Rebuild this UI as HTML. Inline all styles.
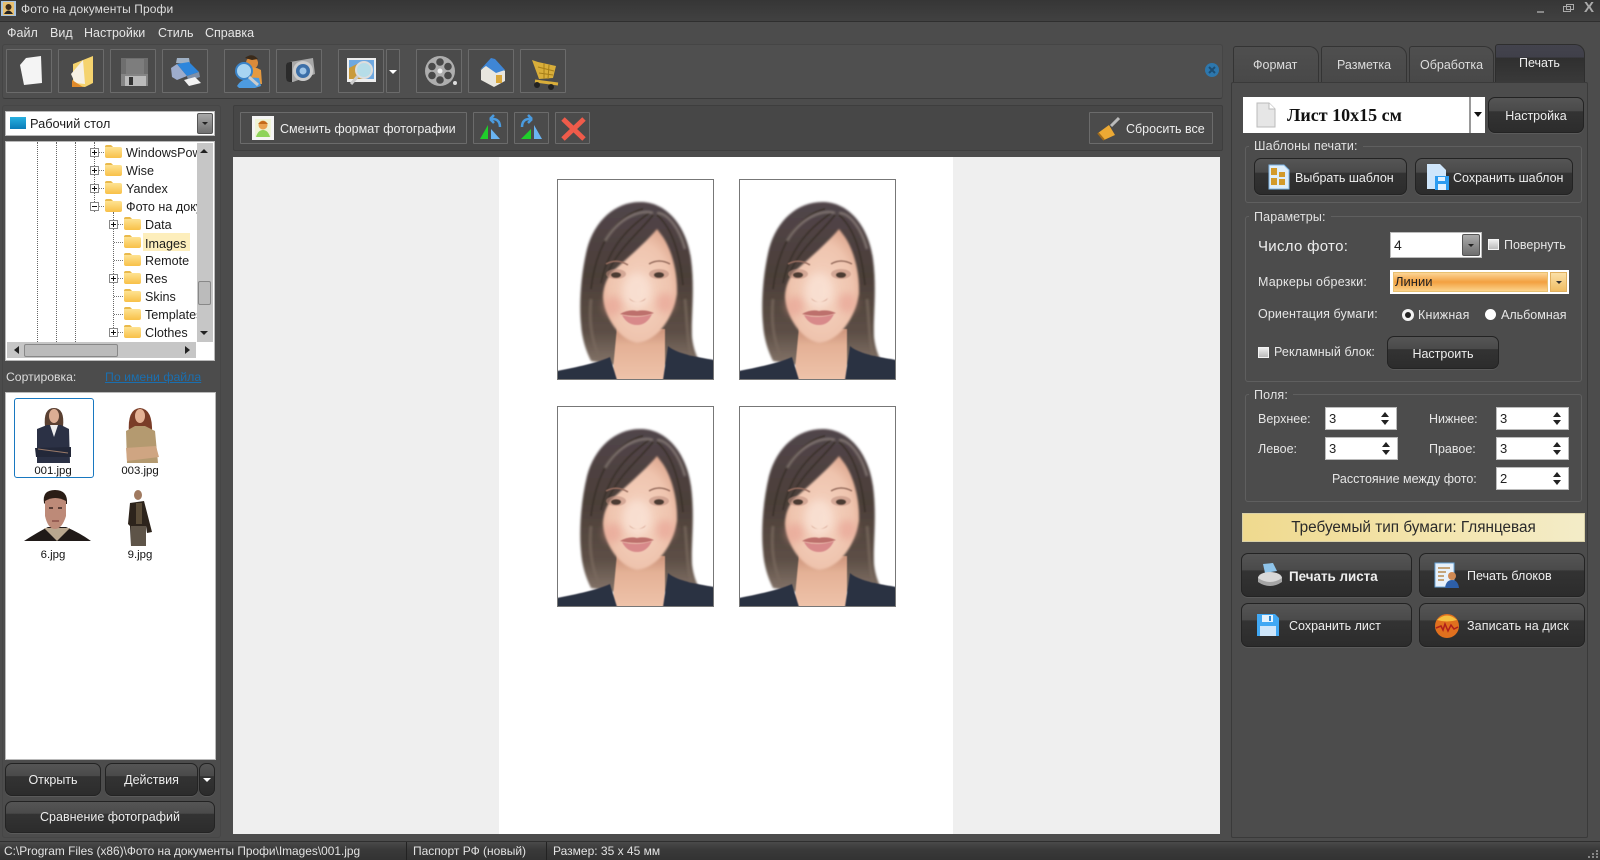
<!DOCTYPE html>
<html lang="ru"><head><meta charset="utf-8"><title>Фото на документы Профи</title>
<style>
*{box-sizing:border-box}
html,body{margin:0;padding:0;width:1600px;height:860px;overflow:hidden;background:#4c4c4c;font-family:"Liberation Sans",sans-serif;font-size:12.5px;color:#e6e6e6}
.a{position:absolute}
.t{position:absolute;white-space:nowrap;line-height:16px;height:16px}
.tb{position:absolute;border:1px solid #6b6b6b;background:#4b4b4b;border-radius:1px}
.tb svg{position:absolute;left:0;top:0}
.d{position:absolute;border:1px solid #232323;border-radius:7px;background:linear-gradient(#555 0,#4a4a4a 38%,#333 40%,#2c2c2c 100%);box-shadow:0 1px 0 #5a5a5a;color:#eee;white-space:nowrap;display:flex;align-items:center;justify-content:center}
.s{padding-top:2px}
.g{position:absolute;border:1px solid #5f5f5f;border-radius:3px}
.gl{position:absolute;background:#4c4c4c;padding:0 5px;line-height:16px;white-space:nowrap;color:#e2e2e2;letter-spacing:.15px}
.inp{position:absolute;background:#fff;color:#222;border:1px solid #bbb;padding-left:3px;line-height:22px;font-size:13px}
.sp{position:absolute;right:7px;width:0;height:0;border-left:4px solid transparent;border-right:4px solid transparent}
.up{top:4px;border-bottom:5px solid #222}.dn{bottom:4px;border-top:5px solid #222}
.ph{position:absolute;width:157px;height:201px;border:1px solid #777;background:#fff;overflow:hidden}
.tl{position:absolute;color:#1c1c1c;font-size:12.6px;line-height:16px;white-space:nowrap}
.bx{position:absolute;width:9px;height:9px;border:1px solid #888;background:#fff}
.bx:before{content:"";position:absolute;left:1px;top:3px;width:5px;height:1px;background:#111}
.bx.p:after{content:"";position:absolute;left:3px;top:1px;width:1px;height:5px;background:#111}
.vd{position:absolute;width:0;border-left:1px dotted #666}
.hd{position:absolute;height:0;border-top:1px dotted #777}
.fo{position:absolute;width:17px;height:16px;margin-top:-2px}
.cb{position:absolute;width:11px;height:11px;background:linear-gradient(#eee,#bbb);border:1px solid #f4f4f4}
.ar{position:absolute;width:0;height:0}
.thl{position:absolute;color:#111;font-size:11.4px;line-height:13px;width:80px;text-align:center}
</style></head><body>
<svg width="0" height="0" style="position:absolute">
<defs>
<linearGradient id="fg" x1="0" y1="0" x2="0" y2="1"><stop offset="0" stop-color="#ffe9a0"/><stop offset="1" stop-color="#f8c048"/></linearGradient>
<radialGradient id="sk" cx=".5" cy=".55" r=".6"><stop offset="0" stop-color="#f6d5c3"/><stop offset=".7" stop-color="#efc4ae"/><stop offset="1" stop-color="#dca68e"/></radialGradient>
<linearGradient id="hr" x1="0" y1="0" x2="0" y2="1"><stop offset="0" stop-color="#51454a"/><stop offset=".45" stop-color="#4c3f39"/><stop offset=".8" stop-color="#5d4f46"/><stop offset="1" stop-color="#85756a"/></linearGradient>
<linearGradient id="nk" x1="0" y1="0" x2="0" y2="1"><stop offset="0" stop-color="#c99078"/><stop offset=".35" stop-color="#e4b196"/><stop offset="1" stop-color="#eec3aa"/></linearGradient>
<filter id="b1" x="-20%" y="-20%" width="140%" height="140%"><feGaussianBlur stdDeviation="1"/></filter>
<filter id="b2" x="-60%" y="-60%" width="220%" height="220%"><feGaussianBlur stdDeviation="4"/></filter>
<filter id="b3" x="-30%" y="-60%" width="160%" height="220%"><feGaussianBlur stdDeviation=".6"/></filter>
<symbol id="folder" viewBox="0 0 17 16"><path d="M0 4Q0 2 2 2H6L8 4H15Q17 4 17 6V13Q17 15 15 15H2Q0 15 0 13Z" fill="url(#fg)"/><path d="M0 4Q0 2 2 2H6L8 4H0Z" fill="#e9b94c"/></symbol>
<symbol id="woman" viewBox="0 0 157 201">
<path d="M85 23C60 22 38 40 30 70C24 95 22 125 24 145C25 160 29 172 34 182L56 186L108 186L143 184C139 176 136 168 135 158C134 138 138 110 134 80C130 50 112 24 85 23Z" fill="url(#hr)" filter="url(#b1)"/>
<path d="M60 148L55 201H108L108 150Z" fill="url(#nk)" filter="url(#b3)"/>
<path d="M0 201V192C20 188 40 184 53 178L60 201Z" fill="#2b3042" filter="url(#b3)"/>
<path d="M106 201L111 167C120 175 140 178 157 181V201Z" fill="#2b3042" filter="url(#b3)"/>
<path d="M100 50C90 62 72 78 56 92C50 98 46 108 46 118C47 135 60 160 80 164C100 162 116 140 120 115C121 92 114 70 106 58Z" fill="url(#sk)" filter="url(#b1)"/>
<ellipse cx="56" cy="127" rx="9" ry="10" fill="#e79d90" opacity=".55" filter="url(#b2)"/>
<ellipse cx="108" cy="124" rx="9" ry="10" fill="#e79d90" opacity=".55" filter="url(#b2)"/>
<ellipse cx="80" cy="112" rx="14" ry="18" fill="#fae4d8" opacity=".7" filter="url(#b2)"/>
<path d="M92 34C76 46 52 64 44 104M96 36C84 52 60 70 50 96M86 30C62 36 40 60 34 110M100 36C112 46 122 66 126 106" stroke="#3a302c" stroke-width="2" fill="none" opacity=".75" filter="url(#b3)"/>
<path d="M96 34C84 30 62 38 48 62M100 34C110 34 122 48 128 70" stroke="#8b7f7a" stroke-width="2.500" fill="none" opacity=".8" filter="url(#b1)"/>
<path d="M34 120C32 140 34 160 42 178M128 120C130 140 130 160 134 176" stroke="#7a6a5e" stroke-width="3" fill="none" opacity=".7" filter="url(#b1)"/>
<path d="M49 85Q60 79 71 86" stroke="#9a6f60" stroke-width="1.500" fill="none" filter="url(#b3)"/>
<path d="M92 85Q102 79 113 85" stroke="#9a6f60" stroke-width="1.500" fill="none" filter="url(#b3)"/>
<ellipse cx="59" cy="95" rx="10" ry="5" fill="#c09080" opacity=".6" filter="url(#b3)"/>
<ellipse cx="102" cy="95" rx="10" ry="5" fill="#c09080" opacity=".6" filter="url(#b3)"/>
<ellipse cx="59" cy="96" rx="5" ry="2.800" fill="#4b3a30" filter="url(#b3)"/>
<ellipse cx="102" cy="96" rx="5" ry="2.800" fill="#4b3a30" filter="url(#b3)"/>
<path d="M72 119Q80 127 89 119Q87 123 80 123Q74 123 72 119Z" fill="#c9937f" filter="url(#b3)"/>
<path d="M63 135Q72 130 80 132Q88 130 97 134Q90 137 80 137Q70 137 63 135Z" fill="#bd6f6c" filter="url(#b3)"/>
<path d="M65 136Q80 140 95 135Q90 146 80 146Q70 146 65 136Z" fill="#d8898a" filter="url(#b3)"/>
</symbol>
</defs>
</svg>

<!-- title bar -->
<div class="a" style="left:0;top:0;width:1600px;height:22px;background:linear-gradient(#363636,#414141);border-bottom:1px solid #2f2f2f"></div>
<svg class="a" style="left:1px;top:1px" width="15" height="15"><rect width="15" height="15" fill="#a9c4df"/><rect x="2" y="1" width="11" height="13" fill="#e8c070"/><circle cx="7.500" cy="6" r="3" fill="#3a2a1a"/><path d="M3 13Q7.500 6 12 13Z" fill="#222"/></svg>
<div class="t" style="left:21px;top:1px;font-size:12px;letter-spacing:.1px;color:#ddd">Фото на документы Профи</div>
<div class="a" style="left:1537px;top:11px;width:7px;height:2px;background:#888"></div>
<div class="a" style="left:1563px;top:6px;width:8px;height:6px;border:1px solid #aaa"></div>
<div class="a" style="left:1566px;top:4px;width:8px;height:6px;border:1px solid #aaa"></div>
<div class="t" style="left:1584px;top:0;font-size:15px;color:#aaa;font-weight:bold">X</div>

<!-- menu -->
<div class="t" style="left:7px;top:25px">Файл</div>
<div class="t" style="left:50px;top:25px">Вид</div>
<div class="t" style="left:84px;top:25px">Настройки</div>
<div class="t" style="left:158px;top:25px">Стиль</div>
<div class="t" style="left:205px;top:25px">Справка</div>

<!-- main toolbar -->
<div class="a" style="left:2px;top:44px;width:1221px;height:55px;background:#4f4f4f;border:1px solid #454545;border-bottom-color:#3a3a3a;border-radius:3px"></div>
<div class="tb" style="left:6px;top:49px;width:46px;height:44px"><svg width="46" height="44"><path d="M19 8L34 6L35 33L17 35L13 15Z" fill="#f4f4f4"/></svg></div>
<div class="tb" style="left:58px;top:49px;width:46px;height:44px"><svg width="46" height="44"><path d="M14 14L34 6V33L26 37L14 36Z" fill="#f5d36e"/><path d="M12 24L24 10L26 34L16 33Z" fill="#f6f0e4"/><path d="M13 30L24 37L13 37Z" fill="#e08a2a"/></svg></div>
<div class="tb" style="left:110px;top:49px;width:46px;height:44px"><svg width="46" height="44"><path d="M10 8H37V36H10Z" fill="#858585"/><rect x="10" y="8" width="27" height="16" fill="#6e6e6e"/><rect x="15" y="9" width="18" height="15" fill="#7d7d7d"/><rect x="14" y="26" width="21" height="10" fill="#bbb"/><rect x="18" y="27" width="4" height="8" fill="#333"/></svg></div>
<div class="tb" style="left:162px;top:49px;width:46px;height:44px"><svg width="46" height="44"><path d="M13 13L14 8L26 8L27 14Z" fill="#9fb0c4"/><path d="M8 18L14 14L24 26L14 30L9 27Z" fill="#9daccc"/><path d="M14 14L26 12L36 22L24 26Z" fill="#2e86dc"/><path d="M24 26L36 22L37 27L25 31Z" fill="#7f90a8"/><path d="M21 30L32 27L38 33L26 36Z" fill="#f2f2f2"/></svg></div>
<div class="tb" style="left:224px;top:49px;width:46px;height:44px"><svg width="46" height="44"><circle cx="27" cy="13" r="6" fill="#d98a3a"/><path d="M20 8Q27 2 33 9L27 10Z" fill="#3a2a1a"/><path d="M21 19Q27 15 36 20L37 34H25Z" fill="#e69a40"/><path d="M12 36Q18 26 34 28L36 36L30 38H14Z" fill="#4d9be0"/><circle cx="19" cy="21" r="8" fill="#a8d4f2" stroke="#3a83c8" stroke-width="2"/><path d="M24 27L33 35" stroke="#ccc" stroke-width="3"/></svg></div>
<div class="tb" style="left:276px;top:49px;width:46px;height:44px"><svg width="46" height="44"><path d="M9 15Q9 12 13 12L36 8L38 24L16 32H12Q9 32 9 28Z" fill="#a8a8a8"/><path d="M9 15Q9 12 13 12H15V32H12Q9 32 9 28Z" fill="#2b2b2b"/><circle cx="26" cy="21" r="10" fill="#ccc"/><circle cx="26" cy="21" r="7" fill="#3c6fa8"/><circle cx="26" cy="21" r="3.500" fill="#9ec5e8"/></svg></div>
<div class="tb" style="left:338px;top:49px;width:46px;height:44px"><svg width="46" height="44"><rect x="8" y="8" width="29" height="24" fill="#eee"/><rect x="10" y="10" width="25" height="19" fill="#6ea8e0"/><path d="M10 29V18L18 14L26 24V29Z" fill="#c99a3a"/><circle cx="25" cy="20" r="8" fill="#b6dde8" stroke="#ddd" stroke-width="2"/><path d="M19 26L12 34" stroke="#ccc" stroke-width="3"/></svg></div>
<div class="tb" style="left:386px;top:49px;width:14px;height:44px"><div class="ar" style="left:2px;top:20px;border-left:4px solid transparent;border-right:4px solid transparent;border-top:4px solid #fff"></div></div>
<div class="tb" style="left:416px;top:49px;width:46px;height:44px"><svg width="46" height="44"><circle cx="23" cy="21" r="15" fill="#aeaeae"/><circle cx="23" cy="21" r="2.500" fill="#eee"/><g fill="#4a4a4a"><circle cx="23" cy="12" r="3.800"/><circle cx="23" cy="30" r="3.800"/><circle cx="15" cy="16.500" r="3.800"/><circle cx="31" cy="16.500" r="3.800"/><circle cx="15" cy="25.500" r="3.800"/><circle cx="31" cy="25.500" r="3.800"/></g><circle cx="38" cy="33" r="2" fill="#ddd"/></svg></div>
<div class="tb" style="left:468px;top:49px;width:46px;height:44px"><svg width="46" height="44"><path d="M12 20V30L25 37L36 31V21L24 9Z" fill="#e8e6df"/><path d="M11 20L22 8L26 9L36 20L27 23L17 16Z" fill="#3f86d6"/><rect x="27" y="25" width="6" height="8" fill="#d8a63a"/></svg></div>
<div class="tb" style="left:520px;top:49px;width:46px;height:44px"><svg width="46" height="44"><path d="M11 10L17 12L35 16L32 28L18 29Z" fill="#d9ae3a"/><path d="M17 17L33 21M18 23L32 25M23 13L23 29M28 15L27 29" stroke="#a67d18" stroke-width="1"/><path d="M14 31L37 34" stroke="#d9ae3a" stroke-width="3"/><circle cx="16" cy="35" r="3" fill="#222"/><circle cx="30" cy="37" r="3" fill="#222"/></svg></div>
<svg class="a" style="left:1204px;top:62px" width="16" height="16"><circle cx="8" cy="8" r="7" fill="#2d77ad"/><path d="M5 5L8 8L11 5M5 11L8 8L11 11" stroke="#1d4d72" stroke-width="2" fill="none"/></svg>

<!-- left panel -->
<div class="a" style="left:2px;top:105px;width:219px;height:733px;background:#4c4c4c;border:1px solid #464646;border-radius:3px"></div>
<div class="a" style="left:5px;top:111px;width:210px;height:25px;background:#fff;border:1px solid #b9b9b9"></div>
<div class="a" style="left:10px;top:117px;width:16px;height:12px;background:linear-gradient(#27b0e0,#0a7cb8)"></div>
<div class="t" style="left:30px;top:116px;color:#1c1c1c;font-size:12.800px">Рабочий стол</div>
<div class="a" style="left:197px;top:113px;width:16px;height:21px;background:linear-gradient(#a8a8a8,#707070);border:1px solid #555;border-radius:2px"></div>
<div class="ar" style="left:202px;top:122px;border-left:3px solid transparent;border-right:3px solid transparent;border-top:3px solid #222"></div>

<div class="a" style="left:5px;top:141px;width:210px;height:220px;background:#fff;border:1px solid #b9b9b9"></div>
<div class="a" style="left:6px;top:142px;width:191px;height:200px;overflow:hidden">
 <div class="vd" style="left:31px;top:0;height:200px"></div><div class="vd" style="left:50px;top:0;height:200px"></div><div class="vd" style="left:69px;top:0;height:200px"></div><div class="vd" style="left:88px;top:0;height:70px"></div><div class="vd" style="left:107px;top:70px;height:120px"></div>
 <div class="hd" style="left:92px;top:10px;width:8px"></div><div class="hd" style="left:92px;top:28px;width:8px"></div><div class="hd" style="left:92px;top:46px;width:8px"></div><div class="hd" style="left:92px;top:64px;width:8px"></div>
 <div class="hd" style="left:111px;top:82px;width:8px"></div><div class="hd" style="left:108px;top:100px;width:11px"></div><div class="hd" style="left:108px;top:118px;width:11px"></div><div class="hd" style="left:111px;top:136px;width:8px"></div><div class="hd" style="left:108px;top:154px;width:11px"></div><div class="hd" style="left:108px;top:172px;width:11px"></div><div class="hd" style="left:111px;top:190px;width:8px"></div>
 <div class="bx p" style="left:84px;top:6px"></div><div class="bx p" style="left:84px;top:24px"></div><div class="bx p" style="left:84px;top:42px"></div><div class="bx" style="left:84px;top:60px"></div>
 <div class="bx p" style="left:103px;top:78px"></div><div class="bx p" style="left:103px;top:132px"></div><div class="bx p" style="left:103px;top:186px"></div>
 <svg class="fo" style="left:99px;top:3px"><use href="#folder"/></svg><div class="tl" style="left:120px;top:3px">WindowsPowerShell</div>
 <svg class="fo" style="left:99px;top:21px"><use href="#folder"/></svg><div class="tl" style="left:120px;top:21px">Wise</div>
 <svg class="fo" style="left:99px;top:39px"><use href="#folder"/></svg><div class="tl" style="left:120px;top:39px">Yandex</div>
 <svg class="fo" style="left:99px;top:57px"><use href="#folder"/></svg><div class="tl" style="left:120px;top:57px">Фото на документы</div>
 <svg class="fo" style="left:118px;top:75px"><use href="#folder"/></svg><div class="tl" style="left:139px;top:75px">Data</div>
 <div class="a" style="left:137px;top:91px;width:47px;height:18px;background:#fdeebc"></div>
 <svg class="fo" style="left:118px;top:93px"><use href="#folder"/></svg><div class="tl" style="left:139px;top:94px">Images</div>
 <svg class="fo" style="left:118px;top:111px"><use href="#folder"/></svg><div class="tl" style="left:139px;top:111px">Remote</div>
 <svg class="fo" style="left:118px;top:129px"><use href="#folder"/></svg><div class="tl" style="left:139px;top:129px">Res</div>
 <svg class="fo" style="left:118px;top:147px"><use href="#folder"/></svg><div class="tl" style="left:139px;top:147px">Skins</div>
 <svg class="fo" style="left:118px;top:165px"><use href="#folder"/></svg><div class="tl" style="left:139px;top:165px">Templates</div>
 <svg class="fo" style="left:118px;top:183px"><use href="#folder"/></svg><div class="tl" style="left:139px;top:183px">Clothes</div>
</div>
<div class="a" style="left:197px;top:143px;width:16px;height:199px;background:#c6c6c6"></div>
<div class="a" style="left:198px;top:281px;width:13px;height:24px;background:#bbb;border:1px solid #888;border-radius:2px"></div>
<div class="ar" style="left:200px;top:149px;border-left:4px solid transparent;border-right:4px solid transparent;border-bottom:4px solid #222"></div>
<div class="ar" style="left:200px;top:331px;border-left:4px solid transparent;border-right:4px solid transparent;border-top:4px solid #222"></div>
<div class="a" style="left:7px;top:342px;width:189px;height:16px;background:#c6c6c6"></div>
<div class="a" style="left:24px;top:344px;width:94px;height:13px;background:#bbb;border:1px solid #888;border-radius:2px"></div>
<div class="ar" style="left:14px;top:346px;border-top:4px solid transparent;border-bottom:4px solid transparent;border-right:5px solid #222"></div>
<div class="ar" style="left:185px;top:346px;border-top:4px solid transparent;border-bottom:4px solid transparent;border-left:5px solid #222"></div>

<div class="t" style="left:6px;top:369px;color:#ddd;font-size:12.200px">Сортировка:</div>
<div class="t" style="left:105px;top:369px;color:#1a6fb0;text-decoration:underline;font-size:12.300px">По имени файла</div>

<div class="a" style="left:5px;top:392px;width:211px;height:368px;background:#fff;border:1px solid #b9b9b9"></div>
<div class="a" style="left:14px;top:398px;width:80px;height:80px;border:1px solid #1878c0;border-radius:3px"></div>
<!-- thumbs -->
<svg class="a" style="left:30px;top:405px" width="50" height="60"><path d="M15 22Q13 3 24 3Q35 3 33 22Z" fill="#5a4032"/><ellipse cx="24" cy="11" rx="5" ry="7" fill="#dcae94"/><path d="M7 24L17 20H31L39 24L40 58H7Z" fill="#2b3145"/><path d="M20 20L24 32L28 20Z" fill="#eee"/><path d="M5 43L41 42L41 52L6 52Z" fill="#232839"/><path d="M8 44L38 48" stroke="#9a7a68" stroke-width="1"/></svg>
<div class="thl" style="left:13px;top:465px">001.jpg</div>
<svg class="a" style="left:115px;top:405px" width="50" height="60"><path d="M14 28Q12 4 25 3Q38 4 37 28Z" fill="#7a3d28"/><ellipse cx="25" cy="11" rx="5" ry="7" fill="#e4b295"/><path d="M11 26L20 21H30L40 26L43 58H12Z" fill="#b49a70"/><path d="M11 43L41 41L44 52L12 56Z" fill="#cfa582"/></svg>
<div class="thl" style="left:100px;top:465px">003.jpg</div>
<svg class="a" style="left:20px;top:488px" width="72" height="56"><path d="M4 53Q18 44 28 39L46 39Q60 45 71 53Z" fill="#201a18"/><path d="M24 40L37 53L50 40Z" fill="#b9a78f"/><path d="M24 15Q22 2 35 2Q48 2 47 16L46 16H25Z" fill="#2a1d16"/><path d="M25 13Q35 7 46 13L46 28Q42 41 35 41Q28 41 25 28Z" fill="#bd8a78"/><path d="M29 20H33M38 20H42" stroke="#3a2420" stroke-width="1.500"/><path d="M32 33H39" stroke="#8a5048" stroke-width="1.500"/></svg>
<div class="thl" style="left:13px;top:549px">6.jpg</div>
<svg class="a" style="left:122px;top:488px" width="34" height="60"><ellipse cx="16" cy="7" rx="4" ry="5" fill="#a07a60"/><path d="M8 15L22 13L30 44L25 45L24 38L23 58H9L8 38L6 36Z" fill="#2d241c"/><path d="M14 15H20V36H14Z" fill="#5a4c38"/><path d="M9 38H24V58H9Z" fill="#5e5448"/></svg>
<div class="thl" style="left:100px;top:549px">9.jpg</div>

<div class="d" style="left:5px;top:763px;width:96px;height:33px">Открыть</div>
<div class="d" style="left:105px;top:763px;width:93px;height:33px">Действия</div>
<div class="d" style="left:199px;top:763px;width:16px;height:33px"><div class="ar" style="left:3px;top:14px;border-left:4px solid transparent;border-right:4px solid transparent;border-top:4px solid #fff"></div></div>
<div class="d" style="left:5px;top:801px;width:210px;height:32px">Сравнение фотографий</div>

<!-- center toolbar -->
<div class="a" style="left:233px;top:105px;width:990px;height:46px;background:#474747;border:1px solid #3e3e3e;border-radius:2px"></div>
<div class="tb" style="left:240px;top:112px;width:227px;height:32px"></div>
<svg class="a" style="left:252px;top:116px" width="22" height="24"><rect width="22" height="24" fill="#f4f4f4"/><rect x="3" y="3" width="16" height="18" fill="#eef3d6"/><circle cx="11" cy="9" r="4.500" fill="#e9a14e"/><path d="M6 8Q11 2 16 8Z" fill="#c26a1a"/><path d="M4 21Q6 14 11 14Q16 14 18 21Z" fill="#8ed35a"/></svg>
<div class="t" style="left:280px;top:121px;font-size:12.550px;color:#eee">Сменить формат фотографии</div>
<div class="tb" style="left:473px;top:112px;width:35px;height:32px"><svg width="35" height="32"><path d="M6 26L14 12V26Z" fill="#1fcf2a"/><path d="M17 16V26H26Z" fill="#6ab4f2"/><path d="M26 14Q26 5 16 6M16 6L20 2M16 6L20 10" stroke="#4a9be0" stroke-width="2.500" fill="none"/></svg></div>
<div class="tb" style="left:514px;top:112px;width:35px;height:32px"><svg width="35" height="32"><path d="M27 26L19 12V26Z" fill="#6ab4f2"/><path d="M16 16V26H6Z" fill="#1fcf2a"/><path d="M7 14Q7 5 17 6M17 6L13 2M17 6L13 10" stroke="#4a9be0" stroke-width="2.500" fill="none"/></svg></div>
<div class="tb" style="left:555px;top:112px;width:35px;height:32px"><svg width="35" height="32"><path d="M7 6L28 26M28 6L7 26" stroke="#ef5b4a" stroke-width="5"/></svg></div>
<div class="tb" style="left:1089px;top:112px;width:124px;height:32px"><svg width="30" height="30"><path d="M8 20L19 12L25 22L14 27Z" fill="#eca934"/><path d="M8 20L14 27" stroke="#a06a1a" stroke-width="2"/><path d="M21 13L29 5" stroke="#bbb" stroke-width="3"/></svg></div>
<div class="t" style="left:1126px;top:121px;font-size:12.500px;color:#eee">Сбросить все</div>

<!-- canvas -->
<div class="a" style="left:233px;top:157px;width:987px;height:677px;background:#efefef"></div>
<div class="a" style="left:499px;top:157px;width:454px;height:677px;background:#fff"></div>
<div class="ph" style="left:557px;top:179px"><svg width="155" height="199" viewBox="1 1 155 199"><use href="#woman" width="157" height="201"/></svg></div>
<div class="ph" style="left:739px;top:179px"><svg width="155" height="199" viewBox="1 1 155 199"><use href="#woman" width="157" height="201"/></svg></div>
<div class="ph" style="left:557px;top:406px"><svg width="155" height="199" viewBox="1 1 155 199"><use href="#woman" width="157" height="201"/></svg></div>
<div class="ph" style="left:739px;top:406px"><svg width="155" height="199" viewBox="1 1 155 199"><use href="#woman" width="157" height="201"/></svg></div>

<!-- right tabs -->
<div class="a" style="left:1233px;top:46px;width:86px;height:37px;background:linear-gradient(#4f4f4f,#484848);border:1px solid #343434;border-bottom:0;border-radius:3px 10px 0 0"></div>
<div class="a" style="left:1321px;top:46px;width:86px;height:37px;background:linear-gradient(#4f4f4f,#484848);border:1px solid #343434;border-bottom:0;border-radius:3px 10px 0 0"></div>
<div class="a" style="left:1409px;top:46px;width:85px;height:37px;background:linear-gradient(#4f4f4f,#484848);border:1px solid #343434;border-bottom:0;border-radius:3px 10px 0 0"></div>
<div class="a" style="left:1495px;top:44px;width:90px;height:39px;background:linear-gradient(#43434d 0,#40404a 32%,#2f2f2f 34%,#3a3a3a 100%);border:1px solid #2e2e2e;border-bottom:0;border-radius:3px 10px 0 0"></div>
<div class="t" style="left:1253px;top:57px;color:#ddd">Формат</div>
<div class="t" style="left:1337px;top:57px;color:#ddd">Разметка</div>
<div class="t" style="left:1420px;top:57px;color:#ddd">Обработка</div>
<div class="t" style="left:1519px;top:55px;color:#eee">Печать</div>
<div class="a" style="left:1231px;top:82px;width:357px;height:756px;background:#4c4c4c;border:1px solid #3a3a3a;border-radius:2px"></div>

<!-- sheet combo -->
<div class="a" style="left:1243px;top:97px;width:242px;height:36px;background:#fff"></div>
<div class="a" style="left:1469px;top:97px;width:2px;height:36px;background:#999"></div>
<svg class="a" style="left:1256px;top:102px" width="20" height="26"><path d="M1 1H13L19 7V25H1Z" fill="#e6e6e6" stroke="#bbb"/><path d="M13 1V7H19" fill="#fff" stroke="#bbb"/></svg>
<div class="t" style="left:1287px;top:106px;height:18px;line-height:18px;font-family:'Liberation Serif',serif;font-weight:bold;font-size:18px;color:#111">Лист 10x15 см</div>
<div class="ar" style="left:1474px;top:112px;border-left:4px solid transparent;border-right:4px solid transparent;border-top:5px solid #111"></div>
<div class="d s" style="left:1488px;top:97px;width:96px;height:36px">Настройка</div>

<!-- templates -->
<div class="g" style="left:1245px;top:146px;width:337px;height:57px"></div>
<div class="gl" style="left:1249px;top:138px">Шаблоны печати:</div>
<div class="d s" style="left:1254px;top:158px;width:153px;height:37px;justify-content:flex-start;padding-left:40px">Выбрать шаблон</div>
<svg class="a" style="left:1268px;top:164px" width="22" height="26"><path d="M1 1H16L21 6V25H1Z" fill="#dfeefa" stroke="#7fb6e6"/><g fill="#d39a2a"><rect x="3" y="4" width="6" height="7"/><rect x="11" y="8" width="6" height="5"/><rect x="3" y="14" width="6" height="7"/><rect x="11" y="15" width="6" height="6"/></g></svg>
<div class="d s" style="left:1415px;top:158px;width:158px;height:37px;justify-content:flex-start;padding-left:37px">Сохранить шаблон</div>
<svg class="a" style="left:1426px;top:163px" width="24" height="28"><path d="M1 1H14L20 7V26H1Z" fill="#cfe6fb"/><rect x="9" y="13" width="14" height="14" fill="#2d9cf0"/><rect x="12" y="14" width="7" height="4" fill="#e0f1ff"/><rect x="12" y="21" width="8" height="6" fill="#e0f1ff"/></svg>

<!-- params -->
<div class="g" style="left:1245px;top:216px;width:337px;height:166px"></div>
<div class="gl" style="left:1249px;top:209px">Параметры:</div>
<div class="t" style="left:1258px;top:237px;height:19px;line-height:19px;font-size:15px;color:#eee;letter-spacing:.3px">Число фото:</div>
<div class="inp" style="left:1390px;top:232px;width:92px;height:26px;font-size:14px;line-height:24px">4</div>
<div class="a" style="left:1462px;top:234px;width:18px;height:22px;background:linear-gradient(#aaa,#6e6e6e);border:1px solid #555;border-radius:2px"></div>
<div class="ar" style="left:1468px;top:244px;border-left:3px solid transparent;border-right:3px solid transparent;border-top:3px solid #222"></div>
<div class="cb" style="left:1488px;top:239px"></div>
<div class="t" style="left:1504px;top:237px">Повернуть</div>
<div class="t" style="left:1258px;top:274px;letter-spacing:.2px">Маркеры обрезки:</div>
<div class="a" style="left:1390px;top:270px;width:179px;height:24px;background:#fff"></div>
<div class="a" style="left:1393px;top:272px;width:155px;height:20px;background:linear-gradient(#fcd596,#f3a040 50%,#fbd28a);border:1px solid #e8c070;color:#222;font-size:13px;line-height:18px;padding-left:1px">Линии</div>
<div class="a" style="left:1550px;top:272px;width:17px;height:20px;background:linear-gradient(#fbe0a8,#f0bd64);border:1px solid #e0b060"></div>
<div class="ar" style="left:1556px;top:281px;border-left:3px solid transparent;border-right:3px solid transparent;border-top:3px solid #333"></div>
<div class="t" style="left:1258px;top:306px;letter-spacing:.1px">Ориентация бумаги:</div>
<div class="a" style="left:1402px;top:309px;width:12px;height:12px;border-radius:50%;background:#fff;border:3px solid #f2f2f2"><div class="a" style="left:0;top:0;width:6px;height:6px;border-radius:50%;background:#222"></div></div>
<div class="t" style="left:1418px;top:307px;letter-spacing:.2px">Книжная</div>
<div class="a" style="left:1485px;top:309px;width:11px;height:11px;border-radius:50%;background:#fff"></div>
<div class="t" style="left:1501px;top:307px">Альбомная</div>
<div class="cb" style="left:1258px;top:347px"></div>
<div class="t" style="left:1274px;top:344px;letter-spacing:.1px">Рекламный блок:</div>
<div class="d s" style="left:1387px;top:336px;width:112px;height:33px">Настроить</div>

<!-- margins -->
<div class="g" style="left:1245px;top:394px;width:337px;height:108px"></div>
<div class="gl" style="left:1249px;top:387px">Поля:</div>
<div class="t" style="left:1258px;top:411px">Верхнее:</div>
<div class="inp" style="left:1325px;top:407px;width:72px;height:23px">3<i class="sp up"></i><i class="sp dn"></i></div>
<div class="t" style="left:1429px;top:411px">Нижнее:</div>
<div class="inp" style="left:1496px;top:407px;width:73px;height:23px">3<i class="sp up"></i><i class="sp dn"></i></div>
<div class="t" style="left:1258px;top:441px">Левое:</div>
<div class="inp" style="left:1325px;top:437px;width:73px;height:23px">3<i class="sp up"></i><i class="sp dn"></i></div>
<div class="t" style="left:1429px;top:441px">Правое:</div>
<div class="inp" style="left:1496px;top:437px;width:73px;height:23px">3<i class="sp up"></i><i class="sp dn"></i></div>
<div class="t" style="left:1332px;top:471px">Расстояние между фото:</div>
<div class="inp" style="left:1496px;top:467px;width:73px;height:23px">2<i class="sp up"></i><i class="sp dn"></i></div>

<!-- paper banner -->
<div class="a" style="left:1242px;top:513px;width:343px;height:29px;background:linear-gradient(90deg,#efd98e,#f4e6b0 60%,#f3ecc8);border:1px solid #d8d0a8;color:#2a2a2a;font-size:15.300px;line-height:27px;text-align:center">Требуемый тип бумаги: Глянцевая</div>

<!-- action buttons -->
<div class="d s" style="left:1241px;top:553px;width:171px;height:44px;justify-content:flex-start;padding-left:47px;font-weight:bold;font-size:13.400px">Печать листа</div>
<svg class="a" style="left:1257px;top:562px" width="26" height="26"><path d="M6 2L16 1L20 9L8 11Z" fill="#8fc4ea"/><ellipse cx="13" cy="16" rx="12" ry="6" fill="#d8d8d8"/><path d="M1 16V20Q13 28 25 20V16Q13 24 1 16Z" fill="#a5a5a5"/></svg>
<div class="d s" style="left:1419px;top:553px;width:166px;height:44px;justify-content:flex-start;padding-left:47px">Печать блоков</div>
<svg class="a" style="left:1434px;top:562px" width="26" height="27"><rect x="1" y="1" width="19" height="24" fill="#e8f1fa" stroke="#6ba8dc"/><path d="M4 6H16M4 10H12M4 14H10M4 18H10" stroke="#b88a50" stroke-width="1.500"/><circle cx="18" cy="14" r="4" fill="#d08a54"/><path d="M11 26Q12 18 18 18Q24 18 25 26Z" fill="#2d5fa8"/></svg>
<div class="d s" style="left:1241px;top:603px;width:171px;height:44px;justify-content:flex-start;padding-left:47px">Сохранить лист</div>
<svg class="a" style="left:1256px;top:613px" width="24" height="24"><path d="M1 1H19L23 5V23H1Z" fill="#40a8f4"/><rect x="6" y="2" width="11" height="7" fill="#e4f2fd"/><rect x="13" y="3" width="2" height="5" fill="#2d88d0"/><rect x="4" y="13" width="16" height="10" fill="#cfe6fa"/></svg>
<div class="d s" style="left:1419px;top:603px;width:166px;height:44px;justify-content:flex-start;padding-left:47px;letter-spacing:.1px">Записать на диск</div>
<svg class="a" style="left:1434px;top:613px" width="26" height="26"><circle cx="13" cy="13" r="12" fill="#e0701e"/><path d="M3 7Q13 -2 23 7Q13 10 3 7Z" fill="#f4c040"/><path d="M2 15L7 13L9 17L11 11L14 18L17 12L20 16L24 14" stroke="#b0201a" stroke-width="1.500" fill="none"/></svg>

<!-- status bar -->
<div class="a" style="left:0;top:841px;width:1600px;height:19px;background:linear-gradient(#4a4a4a,#3a3a3a 40%,#333);border-top:1px solid #2f2f2f"></div>
<div class="a" style="left:406px;top:842px;width:1px;height:18px;background:#222"></div>
<div class="a" style="left:546px;top:842px;width:1px;height:18px;background:#222"></div>
<div class="t" style="left:4px;top:843px;font-size:11.900px;color:#e2e2e2">C:\Program Files (x86)\Фото на документы Профи\Images\001.jpg</div>
<div class="t" style="left:413px;top:843px;font-size:12px;color:#e2e2e2">Паспорт РФ (новый)</div>
<div class="t" style="left:553px;top:843px;font-size:12px;color:#e2e2e2">Размер: 35 х 45 мм</div>
<svg class="a" style="left:1588px;top:849px" width="11" height="10"><g fill="#888"><rect x="8" y="1" width="2" height="2"/><rect x="4" y="4" width="2" height="2"/><rect x="8" y="4" width="2" height="2"/><rect x="0" y="7" width="2" height="2"/><rect x="4" y="7" width="2" height="2"/><rect x="8" y="7" width="2" height="2"/></g></svg>
</body></html>
